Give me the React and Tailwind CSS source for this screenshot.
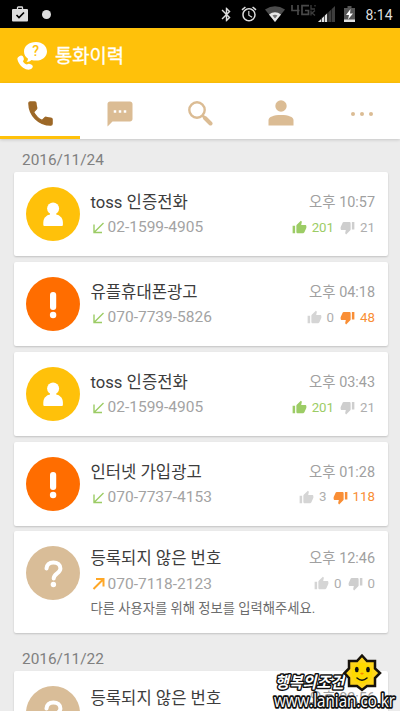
import React from 'react';
import {
  MdTextsms, MdThumbUp, MdThumbDown, MdBluetooth, MdAlarm,
} from 'react-icons/md';

const calls = [
  { kind: 'person', name: 'toss 인증전화', phone: '02-1599-4905', time: '오후 10:57', up: 201, down: 21 },
  { kind: 'alert', name: '유플휴대폰광고', phone: '070-7739-5826', time: '오후 04:18', up: 0, down: 48 },
  { kind: 'person', name: 'toss 인증전화', phone: '02-1599-4905', time: '오후 03:43', up: 201, down: 21 },
  { kind: 'alert', name: '인터넷 가입광고', phone: '070-7737-4153', time: '오후 01:28', up: 3, down: 118 },
  { kind: 'unknown', name: '등록되지 않은 번호', phone: '070-7118-2123', time: '오후 12:46', up: 0, down: 0, outgoing: true, note: '다른 사용자를 위해 정보를 입력해주세요.' },
];

function StatusBar() {
  return (
    <div className="flex h-7 shrink-0 items-center bg-black text-[#dedede]">
      <svg className="ml-3 h-4 w-4" viewBox="0 0 16 16">
        <path d="M5.5 3.5V1.8Q5.500 1 6.300 1H9.700Q10.500 1 10.500 1.800V3.500" fill="none" stroke="currentColor" strokeWidth="1.3" />
        <rect x="0" y="3" width="16" height="12.500" rx="1" fill="currentColor" />
        <path d="M4.500 9l2.500 2.500 5-5" fill="none" stroke="#000" strokeWidth="1.7" />
      </svg>
      <span className="ml-3.5 h-[9px] w-[9px] rounded-full bg-[#dedede]" />
      <div className="ml-auto flex items-center pr-[7.500px]">
        <MdBluetooth className="mr-[5px] h-[17px] w-[17px]" />
        <MdAlarm className="mr-[7px] h-[18px] w-[18px]" />
        <svg className="mr-[6px] h-4 w-5" viewBox="0 0 20 16">
          <path d="M0 3.500Q10-3 20 3.500L10 16z" fill="#4c4c4c" />
          <path d="M4 8.500Q10 4 16 8.500L10 16z" fill="#e8e8e8" />
          <path d="M7.500 9.500Q10 8 12.500 9.500L10 12.500z" fill="#777" />
        </svg>
        <svg className="mr-[1px] h-7 w-[26px]" viewBox="0 -1 26 28">
          <path d="M1 4v5.500h7.500M7 4v10M18 4.700H11v8.600h6.500V9.500H14" fill="none" stroke="#494949" strokeWidth="1.700" />
          <path d="M20 4v4h4M20 9.500v5M24 9.500l-3 2.500 3 2.500M24 4v1.500" fill="none" stroke="#3c3c3c" strokeWidth="1.300" />
        </svg>
        <svg className="mr-[9px] h-4 w-[17px]" viewBox="0 0 17 16">
          <path d="M0 16L17 0v16z" fill="#3e3e3e" />
          <path d="M0 16L9 7.500V16z" fill="#e2e2e2" />
          <path d="M3.500 11v5M6.500 9v7M10 6v10M13.500 3v13" stroke="#111" strokeWidth=".7" />
        </svg>
        <svg className="mr-[11px] h-4 w-[11px]" viewBox="0 0 11 16">
          <path d="M3.500 0h4v2H11v14H0V2h3.500z" fill="#555" />
          <path d="M0 13.500h11V16H0z" fill="#e0e0e0" />
          <path d="M6.500 3L2 9h3l-1 4.500L9 7.500H6z" fill="#fff" />
        </svg>
        <span className="pt-[2px] text-[14px] leading-none">8:14</span>
      </div>
    </div>
  );
}

function Header() {
  return (
    <header className="flex h-[55px] shrink-0 items-center bg-[#ffc10a] text-white">
      <svg className="ml-[17px] h-[30px] w-[31px]" viewBox="0 0 31 30">
        <path d="M19 1C12 1 7 5 7 10.500c0 3.200 1.500 5.500 4 7.200-.2 1.700-.7 2.500-1.700 3.300 2.300 0 4-.8 5.200-2 1.400.4 3 .6 4.500.6 6.500 0 11-4 11-9.100S25.500 1 19 1z" fill="#fff" />
        <text x="18.700" y="15.300" textAnchor="middle" fontSize="14" fontWeight="500" fill="#ffc10a">?</text>
        <path d="M2 15.500c2.200-1.700 3.800-1 4.500 1 .6 1.700.5 2.400-.6 3.400.7 1.800 2 3 4 3.700 1.200-1.100 2.200-1.200 3.800-.4 2.500 1.300 2.700 2.500 1 4.300-1.800 1.800-5.500 1.400-8.600-.8C2.500 24.200-.1 19 .5 17c.2-.6.800-1.200 1.500-1.500z" fill="#fff" />
      </svg>
      <h1 className="ml-[7px] pt-[3px] text-[18.800px] font-normal leading-none [-webkit-text-stroke:0.300px_#fff]">통화이력</h1>
    </header>
  );
}

function Tabs() {
  return (
    <nav className="grid h-14 shrink-0 grid-cols-5 bg-white text-[#dbbc94] shadow-[0_1px_3px_rgba(0,0,0,0.16)]">
      <div className="flex items-center justify-center border-b-[3px] border-[#ffc10a] pt-[8px] text-[#9d6827]">
        <svg className="h-[31px] w-[31px]" viewBox="0 0 24 24" fill="currentColor" stroke="currentColor" strokeWidth="1" strokeLinejoin="round">
          <path d="M6.620 10.790c1.440 2.830 3.760 5.140 6.590 6.590l2.200-2.200c.27-.27.67-.36 1.020-.24 1.120.37 2.330.57 3.570.57.55 0 1 .45 1 1V20c0 .55-.45 1-1 1-9.390 0-17-7.610-17-17 0-.55.45-1 1-1h3.500c.55 0 1 .45 1 1 0 1.250.2 2.450.57 3.570.11.35.03.74-.25 1.020l-2.200 2.200z" />
        </svg>
      </div>
      <div className="flex items-center justify-center pt-[6px]">
        <MdTextsms className="h-[30px] w-[30px]" />
      </div>
      <div className="flex items-center justify-center pt-[4px]">
        <svg className="h-[26px] w-[26px]" viewBox="0 0 26 26" fill="none" stroke="currentColor">
          <circle cx="10" cy="10" r="7.700" strokeWidth="2.400" />
          <path d="M15.500 15.500l2 2" strokeWidth="2.600" />
          <path d="M18 18l5.500 5.500" strokeWidth="4" strokeLinecap="round" />
        </svg>
      </div>
      <div className="flex items-center justify-center pl-[2px] pt-[4px]">
        <svg className="h-[26px] w-[26px]" viewBox="0 0 26 26" fill="currentColor">
          <circle cx="13" cy="6" r="5.700" />
          <path d="M.5 25.500V20c0-3 5-5 12.500-5s12.500 2 12.500 5v5.500z" />
        </svg>
      </div>
      <div className="flex items-center justify-center gap-[5px] pl-[3px] pt-[5px]">
        <span className="h-1 w-1 rounded-full bg-current" />
        <span className="h-1 w-1 rounded-full bg-current" />
        <span className="h-1 w-1 rounded-full bg-current" />
      </div>
    </nav>
  );
}

const avatarColors = { person: 'bg-[#ffc10a]', alert: 'bg-[#ff6d00]', unknown: 'bg-[#d9bd98]' };

function Avatar({ kind }) {
  return (
    <div className={`h-[54px] w-[54px] shrink-0 rounded-full ${avatarColors[kind]}`}>
      <svg className="h-full w-full" viewBox="0 0 54 54">
        {kind === 'person' && (
          <g fill="#fff">
            <circle cx="27.100" cy="21.500" r="6" />
            <path d="M24 25h6.200v4H24z" />
            <path d="M17.300 38v-2.500c0-5 4-8.500 9.800-8.500s9.800 3.500 9.800 8.500V38q0 1-1 1H18.300q-1 0-1-1z" />
          </g>
        )}
        {kind === 'alert' && (
          <g fill="#fff">
            <rect x="24" y="15" width="6.200" height="18" rx="3" />
            <circle cx="27.100" cy="38" r="3.200" />
          </g>
        )}
        {kind === 'unknown' && (
          <g>
            <path d="M20.500 22.500c.4-3.800 3-6 6.900-6 4.100 0 7 2.300 7 6 0 4.800-6.700 5-6.700 10" fill="none" stroke="#fff" strokeWidth="4" strokeLinecap="round" />
            <circle cx="27.400" cy="38.500" r="2.700" fill="#fff" />
          </g>
        )}
      </svg>
    </div>
  );
}

function CallArrow({ outgoing }) {
  return (
    <svg
      className={`mr-[1px] h-[16px] w-[16px] ${outgoing ? 'text-[#ffa726]' : 'text-[#9ccc65]'}`}
      viewBox="0 0 16 16"
      fill="none"
      stroke="currentColor"
    >
      {outgoing
        ? <path d="M2.500 13L12 3.500M5 3h7.500v7.500" strokeWidth="2" />
        : <path d="M12.500 3L3.500 12M3 4.500v8h8" strokeWidth="1.400" />}
    </svg>
  );
}

function CallCard({ kind, name, phone, time, up, down, outgoing, note }) {
  const upColor = up > down ? 'text-[#9ccc65]' : 'text-[#aeaeae]';
  const downColor = down > up ? 'text-[#f98e35]' : 'text-[#aeaeae]';
  return (
    <article className={`flex shrink-0 rounded-[2px] bg-white pl-[12px] pr-[12.500px] shadow-[0_1px_2px_rgba(0,0,0,0.18)] ${note ? 'h-[101.500px]' : 'h-[84px]'}`}>
      <div className="pt-[15px]"><Avatar kind={kind} /></div>
      <div className={`ml-[11px] flex-1 whitespace-nowrap ${note ? 'pt-[16px]' : 'pt-[19px]'}`}>
        <div className="flex h-6 items-center justify-between">
          <h2 className="text-[16.650px] leading-6 text-[#3c3c3c]">{name}</h2>
          <span className="text-[14.400px] leading-6 text-[#a0a0a0]">{time}</span>
        </div>
        <div className="flex h-[26px] items-center justify-between">
          <div className="flex items-center">
            <CallArrow outgoing={outgoing} />
            <span className="text-[15.500px] leading-none text-[#a3a3a3]">{phone}</span>
          </div>
          <div className="-mt-[1px] flex items-center text-[13.300px] leading-none">
            <MdThumbUp className={`h-[15px] w-[15px] ${up > down ? 'text-[#9ccc65]' : 'text-[#d5d5d5]'}`} />
            <span className={`ml-[5px] ${upColor}`}>{up}</span>
            <MdThumbDown className={`ml-[6px] h-[15px] w-[15px] ${down > up ? 'text-[#f98e35]' : 'text-[#cecece]'}`} />
            <span className={`ml-[5px] ${downColor}`}>{down}</span>
          </div>
        </div>
        {note && <p className="text-[13.300px] leading-[24px] text-[#6c6c6c]">{note}</p>}
      </div>
    </article>
  );
}

function Watermark() {
  return (
    <svg className="absolute bottom-0 right-0 h-[61px] w-[132px]" viewBox="268 650 132 61">
      <g fill="#fff" stroke="#111" strokeLinejoin="round" style={{ paintOrder: 'stroke' }}>
        <text x="275" y="688" fontSize="16" fontWeight="700" fontStyle="italic" strokeWidth="3" textLength="69" lengthAdjust="spacingAndGlyphs">행복의조건</text>
        <text x="274" y="707" fontSize="17.500" fontFamily="'Open Sans', sans-serif" strokeWidth="3.500" textLength="121" lengthAdjust="spacingAndGlyphs">www.lanian.co.kr</text>
      </g>
      <path d="M362 655.500L367 661H375V668.500L380 673L375 678V686H367L362 690L357 686H349V678L344.500 673L349 668.500V661H357Z" fill="#ffd51c" stroke="#17120b" strokeWidth="2.500" />
      <circle cx="362" cy="673" r="10.500" fill="#ffd900" />
      <ellipse cx="356.800" cy="669.500" rx="1.900" ry="2.700" fill="#111" />
      <ellipse cx="368" cy="669.500" rx="1.900" ry="2.700" fill="#111" />
      <path d="M360 673.500l2-1 2 1-2 1.200z" fill="#f88900" />
      <path d="M357 678q5 4.500 10 0" fill="none" stroke="#111" strokeWidth="1.500" strokeLinecap="round" />
    </svg>
  );
}

export default function App() {
  return (
    <div className="relative flex h-[711px] w-[400px] flex-col overflow-hidden bg-[#ececec] font-[Roboto,'Noto_Sans_CJK_KR',sans-serif]">
      <StatusBar />
      <Header />
      <Tabs />
      <main className="flex flex-col pl-[13.500px] pr-[12.500px]">
        <h3 className="h-[33px] pl-[8.500px] pt-[9px] text-[15.400px] leading-6 text-[#808080]">2016/11/24</h3>
        <div className="flex flex-col gap-[5.850px]">
          {calls.map((call, i) => <CallCard key={i} {...call} />)}
        </div>
        <h3 className="h-[38px] pl-[8.500px] pt-[14px] text-[15.400px] leading-6 text-[#808080]">2016/11/22</h3>
        <CallCard kind="unknown" name="등록되지 않은 번호" phone="070-7118-2123" time="오후 02:56" up={0} down={0} outgoing note="다른 사용자를 위해 정보를 입력해주세요." />
      </main>
      <Watermark />
    </div>
  );
}
